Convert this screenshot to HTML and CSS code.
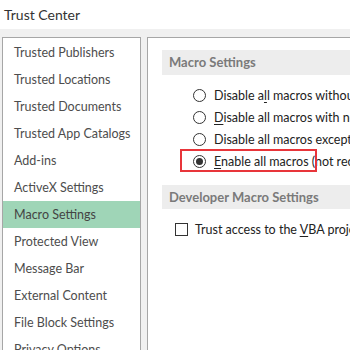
FILE: index.html
```html
<!DOCTYPE html>
<html lang="en">
<head>
  <meta charset="UTF-8" />
  <title>Trust Center</title>
  <link rel="stylesheet" href="styles.css">
</head>
<body>
  <div class="titlebar">Trust Center</div>

  <div class="main">
    <ul class="nav">
      <li>Trusted Publishers</li>
      <li>Trusted Locations</li>
      <li>Trusted Documents</li>
      <li>Trusted App Catalogs</li>
      <li>Add-ins</li>
      <li>ActiveX Settings</li>
      <li class="active">Macro Settings</li>
      <li>Protected View</li>
      <li>Message Bar</li>
      <li>External Content</li>
      <li>File Block Settings</li>
      <li>Privacy Options</li>
    </ul>

    <div class="content">
      <div class="section-head">Macro Settings</div>
      <div class="options">
        <label class="opt"><span class="radio"></span><span>Disable a<u>l</u>l macros without notification</span></label>
        <label class="opt"><span class="radio"></span><span><u>D</u>isable all macros with notification</span></label>
        <label class="opt"><span class="radio"></span><span>Disable all macros except digitally signed macros</span></label>
        <label class="opt marked"><span class="radio checked"></span><span><u>E</u>nable all macros (not recommended; potentially dangerous code can run)</span></label>
      </div>

      <div class="section-head dev">Developer Macro Settings</div>
      <div class="options">
        <label class="opt check-opt"><span class="checkbox"></span><span>Trust access to the <u>V</u>BA project object model</span></label>
      </div>
    </div>
  </div>
</body>
</html>
```

FILE: styles.css
```css
body {
  margin: 0;
  width: 350px;
  height: 350px;
  overflow: hidden;
  font-family: "Lato", "Open Sans", sans-serif;
  font-size: 12.5px;
  background: #f0f0f0;
}

.titlebar {
  height: 29px;
  line-height: 30px;
  padding-left: 4px;
  background: #fff;
  color: #333;
  font-size: 14px;
}

.main {
  display: flex;
  gap: 6px;
  padding: 8px 0 0 2px;
  height: 400px;
}

.nav {
  list-style: none;
  margin: 0;
  padding: 1px 0 0;
  width: 139px;
  flex-shrink: 0;
  box-sizing: border-box;
  border: 1px solid #a6a6a6;
  background: #fff;
}

.nav li {
  height: 27px;
  line-height: 27px;
  padding-left: 11px;
  color: #4d4d4d;
  white-space: nowrap;
}

.nav li.active {
  background: #9fd5b7;
  color: #444;
}

.content {
  flex: 1;
  min-width: 0;
  border: 1px solid #a6a6a6;
  border-right: none;
  background: #fff;
  padding: 12px 0 0 14px;
  white-space: nowrap;
  overflow: hidden;
}

.section-head {
  height: 25px;
  line-height: 25px;
  padding-left: 7px;
  background: #ededed;
  color: #7a7a7a;
  font-weight: bold;
  font-size: 13px;
}

.section-head.dev {
  margin-top: 13px;
  height: 24px;
  line-height: 24px;
}

.options {
  margin-top: 9px;
  padding-left: 31px;
}

.opt {
  position: relative;
  display: flex;
  align-items: center;
  height: 22px;
  color: #222;
}

.radio {
  width: 11px;
  height: 11px;
  border: 1px solid #333;
  border-radius: 50%;
  margin-right: 8px;
  flex-shrink: 0;
  display: flex;
  align-items: center;
  justify-content: center;
}

.radio.checked::after {
  content: "";
  width: 7px;
  height: 7px;
  border-radius: 50%;
  background: #333;
}

.marked::before {
  content: "";
  position: absolute;
  left: -13px;
  top: -1px;
  width: 133px;
  height: 19px;
  border: 2px solid #e8353a;
}

.check-opt {
  margin-left: -18px;
}

.checkbox {
  width: 11px;
  height: 11px;
  border: 1px solid #333;
  margin-right: 7px;
  flex-shrink: 0;
}

u {
  text-decoration-thickness: 1px;
  text-underline-offset: 2px;
}
```
